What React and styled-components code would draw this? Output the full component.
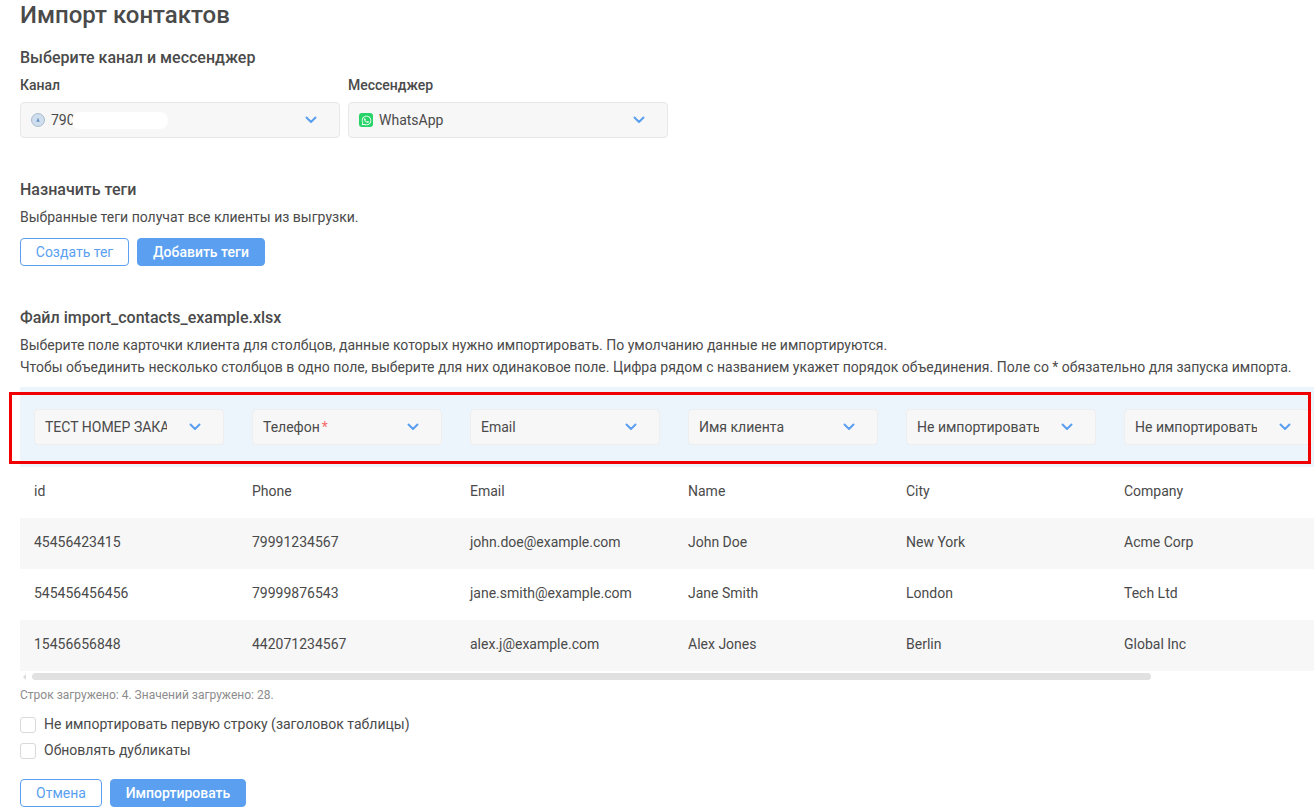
import React from "react";
import styled, { createGlobalStyle } from "styled-components";
import { FaWhatsapp } from "react-icons/fa";

const columns = ["ТЕСТ НОМЕР ЗАКАЗА", "Телефон", "Email", "Имя клиента", "Не импортировать", "Не импортировать"];

const rows = [
  ["id", "Phone", "Email", "Name", "City", "Company"],
  ["45456423415", "79991234567", "john.doe@example.com", "John Doe", "New York", "Acme Corp"],
  ["545456456456", "79999876543", "jane.smith@example.com", "Jane Smith", "London", "Tech Ltd"],
  ["15456656848", "442071234567", "alex.j@example.com", "Alex Jones", "Berlin", "Global Inc"],
];

const Chevron = () => (
  <ChevronIcon viewBox="0 0 12 8">
    <path d="M1.5 1.5 6 6l4.5-4.5" fill="none" stroke="#5a9ff0" strokeWidth="2" strokeLinecap="round" strokeLinejoin="round" />
  </ChevronIcon>
);

const App = () => {
  return (
    <Page>
      <GlobalStyle />
      <Title>Импорт контактов</Title>
      <SectionTitle>Выберите канал и мессенджер</SectionTitle>
      <ChannelRow>
        <Field>
          <FieldLabel>Канал</FieldLabel>
          <BigSelect>
            <Avatar viewBox="0 0 16 16">
              <circle cx="8" cy="8" r="7.4" fill="#cfdfef" stroke="#a3b3c4" />
              <path d="M8 5.5 10 10H6z" fill="#6d93c0" />
            </Avatar>
            <SelectValue>790</SelectValue>
            <Chevron />
            <PhoneMask />
          </BigSelect>
        </Field>
        <Field>
          <FieldLabel>Мессенджер</FieldLabel>
          <BigSelect>
            <WhatsappBadge>
              <FaWhatsapp />
            </WhatsappBadge>
            <SelectValue>WhatsApp</SelectValue>
            <Chevron />
          </BigSelect>
        </Field>
      </ChannelRow>

      <TagsTitle>Назначить теги</TagsTitle>
      <Text>Выбранные теги получат все клиенты из выгрузки.</Text>
      <ButtonRow>
        <OutlineButton $width={109}>Создать тег</OutlineButton>
        <FilledButton $width={128}>Добавить теги</FilledButton>
      </ButtonRow>

      <FileTitle>Файл import_contacts_example.xlsx</FileTitle>
      <Text>Выберите поле карточки клиента для столбцов, данные которых нужно импортировать. По умолчанию данные не импортируются.</Text>
      <Text>
        Чтобы объединить несколько столбцов в одно поле, выберите для них одинаковое поле. Цифра рядом с названием укажет порядок объединения. Поле со * обязательно для запуска импорта.
      </Text>

      <TableWrap>
        <MappingRow>
          {columns.map((name, i) => (
            <Cell key={i}>
              <ColumnSelect>
                <ColumnValue>
                  {name}
                  {name === "Телефон" && <Required>*</Required>}
                </ColumnValue>
                <Chevron />
              </ColumnSelect>
            </Cell>
          ))}
        </MappingRow>
        {rows.map((row, i) => (
          <DataRow key={i} $striped={i % 2 === 1}>
            {row.map((value, j) => (
              <Cell key={j}>{value}</Cell>
            ))}
          </DataRow>
        ))}
      </TableWrap>
      <Scrollbar>
        <ScrollArrow />
        <ScrollThumb />
      </Scrollbar>

      <Note>Строк загружено: 4. Значений загружено: 28.</Note>
      <CheckList>
        <CheckRow>
          <CheckBox />
          Не импортировать первую строку (заголовок таблицы)
        </CheckRow>
        <CheckRow>
          <CheckBox />
          Обновлять дубликаты
        </CheckRow>
      </CheckList>
      <FooterButtons>
        <OutlineButton $width={82}>Отмена</OutlineButton>
        <FilledButton $width={136}>Импортировать</FilledButton>
      </FooterButtons>

      <RedFrame />
    </Page>
  );
};

export default App;

const GlobalStyle = createGlobalStyle`
  html, body {
    margin: 0;
    padding: 0;
    background: #fff;
    overflow: hidden;
  }
  * {
    box-sizing: border-box;
  }
`;

const Page = styled.div`
  position: relative;
  width: 1314px;
  height: 810px;
  overflow: hidden;
  padding-left: 20px;
  font-family: Roboto, "Liberation Sans", sans-serif;
  font-size: 14px;
  color: #4a4a4a;
`;

const Title = styled.h1`
  margin: 0;
  height: 30px;
  font-size: 24px;
  line-height: 30px;
  font-weight: 500;
`;

const SectionTitle = styled.h2`
  margin: 17px 0 0;
  font-size: 16px;
  line-height: 22px;
  font-weight: 500;
`;

const TagsTitle = styled(SectionTitle)`
  margin-top: 41px;
`;

const FileTitle = styled(SectionTitle)`
  margin-top: 41px;
`;

const ChannelRow = styled.div`
  display: flex;
  gap: 8px;
  margin-top: 7px;
`;

const Field = styled.div`
  width: 320px;
`;

const FieldLabel = styled.div`
  font-weight: 500;
  line-height: 18px;
  margin-bottom: 8px;
`;

const BigSelect = styled.div`
  position: relative;
  display: flex;
  align-items: center;
  height: 36px;
  padding: 0 22px 0 10px;
  background: #f7f7f7;
  border: 1px solid #e8e8e8;
  border-radius: 4px;
`;

const SelectValue = styled.span`
  flex: 1;
  margin-left: 6px;
`;

const Avatar = styled.svg`
  width: 14px;
  height: 14px;
  flex: none;
`;

const PhoneMask = styled.div`
  position: absolute;
  left: 51px;
  top: 9px;
  width: 96px;
  height: 17px;
  background: #fff;
  border-radius: 8px;
`;

const WhatsappBadge = styled.span`
  display: flex;
  align-items: center;
  justify-content: center;
  width: 14px;
  height: 14px;
  flex: none;
  border-radius: 3px;
  background: #25d366;
  color: #fff;
  font-size: 11px;
`;

const ChevronIcon = styled.svg`
  width: 12px;
  height: 8px;
  flex: none;
`;

const Text = styled.p`
  margin: 5px 0 0;
  height: 22px;
  line-height: 22px;
  font-size: 14px;

  & + & {
    margin-top: 0;
  }
`;

const ButtonRow = styled.div`
  display: flex;
  gap: 8px;
  margin-top: 10px;
`;

const FooterButtons = styled(ButtonRow)`
  margin-top: 20px;
`;

const OutlineButton = styled.button`
  width: ${(p) => p.$width}px;
  height: 28px;
  padding: 0;
  background: #fff;
  border: 1px solid #5a9ff0;
  border-radius: 4px;
  color: #5a9ff0;
  font: 400 14px Roboto, sans-serif;
`;

const FilledButton = styled(OutlineButton)`
  background: #5a9ff0;
  color: #fff;
  font-weight: 500;
`;

const TableWrap = styled.div`
  margin-top: 9px;
  width: 1294px;
  overflow: hidden;
`;

const MappingRow = styled.div`
  display: flex;
  width: max-content;
  height: 80px;
  align-items: center;
  background: #ecf4fc;
`;

const DataRow = styled.div`
  display: flex;
  width: max-content;
  min-width: 100%;
  height: 51px;
  padding-bottom: 3px;
  align-items: center;
  background: ${(p) => (p.$striped ? "#f7f7f7" : "#fff")};
`;

const Cell = styled.div`
  width: 218px;
  flex: none;
  padding-left: 14px;
`;

const ColumnSelect = styled.div`
  display: flex;
  align-items: center;
  width: 190px;
  height: 36px;
  padding-left: 10px;
  background: #f7f7f7;
  border: 1px solid #eeeeee;
  border-radius: 4px;
`;

const ColumnValue = styled.div`
  width: 122px;
  margin-right: 22px;
  white-space: nowrap;
  overflow: hidden;
`;

const Required = styled.span`
  color: #f56c6c;
  margin-left: 2px;
`;

const Scrollbar = styled.div`
  display: flex;
  align-items: center;
  gap: 6px;
  height: 7px;
  margin-top: 2px;
  padding-left: 3px;
`;

const ScrollArrow = styled.div`
  width: 0;
  height: 0;
  border-style: solid;
  border-width: 3px 3px 3px 0;
  border-color: transparent #dcdcdc transparent transparent;
`;

const ScrollThumb = styled.div`
  width: 1119px;
  height: 7px;
  background: #e1e1e1;
  border-radius: 4px;
`;

const Note = styled.div`
  margin-top: 7px;
  font-size: 12px;
  line-height: 16px;
  color: #8c8c8c;
`;

const CheckList = styled.div`
  display: flex;
  flex-direction: column;
  gap: 10px;
  margin-top: 14px;
`;

const CheckRow = styled.label`
  display: flex;
  align-items: flex-start;
  gap: 8px;
  height: 16px;
  line-height: 14px;
`;

const CheckBox = styled.span`
  width: 16px;
  height: 16px;
  flex: none;
  background: #fff;
  border: 1px solid #d9d9d9;
  border-radius: 3px;
`;

const RedFrame = styled.div`
  position: absolute;
  left: 9px;
  top: 392px;
  width: 1302px;
  height: 72px;
  border: 3px solid #f00000;
  pointer-events: none;
`;
